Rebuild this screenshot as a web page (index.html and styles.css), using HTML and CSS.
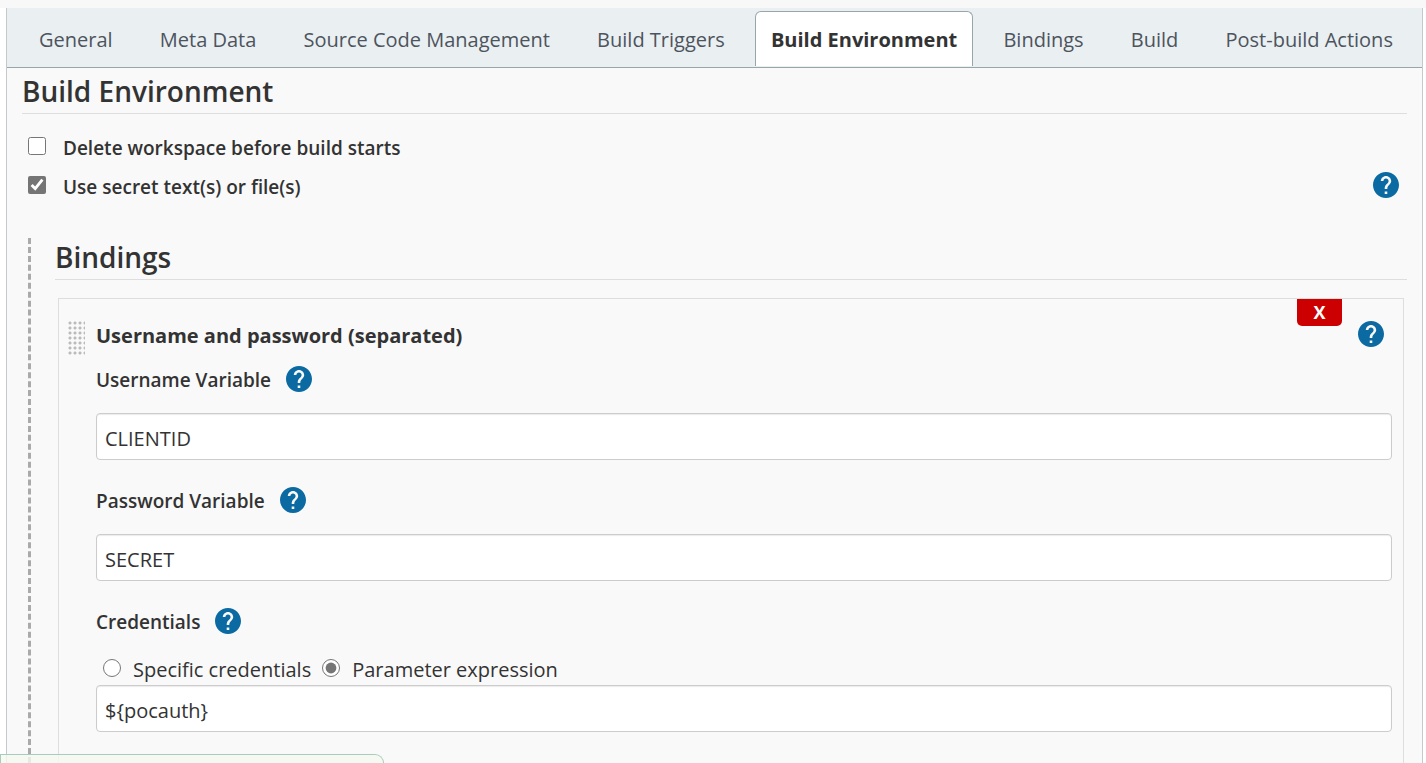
FILE: index.html
```html
<!DOCTYPE html>
<html lang="en">
  <head>
    <meta charset="UTF-8" />
    <meta name="viewport" content="width=device-width, initial-scale=1.0" />
    <title>Job Configuration</title>
    <link rel="stylesheet" href="styles.css">
  </head>
  <body>
    <!-- shared icons -->
    <svg class="sprite" aria-hidden="true">
      <symbol id="help" viewBox="2 2 20 20">
        <path d="M12 2C6.48 2 2 6.48 2 12s4.480 10 10 10 10-4.480 10-10S17.520 2 12 2zm1 17h-2v-2h2v2zm2.070-7.750l-.9.920C13.450 12.900 13 13.500 13 15h-2v-.5c0-1.100.450-2.100 1.170-2.830l1.240-1.260c.370-.360.590-.860.590-1.410 0-1.100-.9-2-2-2s-2 .9-2 2H8c0-2.210 1.790-4 4-4s4 1.790 4 4c0 .880-.360 1.680-.930 2.250z" />
      </symbol>
    </svg>

    <main class="config">
      <nav class="tabs">
        <a class="tab" href="#general">General</a>
        <a class="tab" href="#meta">Meta Data</a>
        <a class="tab" href="#scm">Source Code Management</a>
        <a class="tab" href="#triggers">Build Triggers</a>
        <a class="tab active" href="#environment">Build Environment</a>
        <a class="tab" href="#bindings">Bindings</a>
        <a class="tab" href="#build">Build</a>
        <a class="tab" href="#post-build">Post-build Actions</a>
      </nav>

      <form class="section" id="environment">
        <h2>Build Environment</h2>

        <div class="option">
          <input type="checkbox" id="deleteWorkspace" />
          <label for="deleteWorkspace">Delete workspace before build starts</label>
        </div>
        <div class="option">
          <input type="checkbox" id="useSecret" checked />
          <label for="useSecret">Use secret text(s) or file(s)</label>
          <button class="help" type="button" aria-label="Help for secrets"><svg><use href="#help" /></svg></button>
        </div>

        <div class="nested" id="bindings">
          <h2>Bindings</h2>

          <div class="binding">
            <div class="handle"></div>
            <div class="fields">
              <div class="binding-head">
                <h3>Username and password (separated)</h3>
                <button class="delete" type="button" aria-label="Delete">X</button>
                <button class="help" type="button" aria-label="Help for binding"><svg><use href="#help" /></svg></button>
              </div>

              <div class="field">
                <div class="field-name">
                  <label for="usernameVar">Username Variable</label>
                  <button class="help" type="button" aria-label="Help for username"><svg><use href="#help" /></svg></button>
                </div>
                <input class="text" type="text" id="usernameVar" value="CLIENTID" />
              </div>

              <div class="field">
                <div class="field-name">
                  <label for="passwordVar">Password Variable</label>
                  <button class="help" type="button" aria-label="Help for password"><svg><use href="#help" /></svg></button>
                </div>
                <input class="text" type="text" id="passwordVar" value="SECRET" />
              </div>

              <div class="field">
                <div class="field-name">
                  <label for="credentials">Credentials</label>
                  <button class="help" type="button" aria-label="Help for credentials"><svg><use href="#help" /></svg></button>
                </div>
                <div class="radios">
                  <input type="radio" name="credType" id="specific" />
                  <label for="specific">Specific credentials</label>
                  <input type="radio" name="credType" id="expression" checked />
                  <label for="expression">Parameter expression</label>
                </div>
                <input class="text" type="text" id="credentials" value="${pocauth}" />
              </div>
            </div>
          </div>
        </div>
      </form>
    </main>

    <div class="save-bar"></div>
  </body>
</html>
```
FILE: styles.css
```css
* {
  box-sizing: border-box;
}
body {
  margin: 0;
  height: 100vh;
  display: flex;
  flex-direction: column;
  border-top: 8px solid #f8f8f8;
  background-color: #fff;
  color: #333;
  font-family: "Segoe UI", "Open Sans", "Noto Sans", sans-serif;
  font-size: 20px;
  line-height: 28px;
}
.sprite {
  display: none;
}
.config {
  flex: 1;
  display: flex;
  flex-direction: column;
  margin: 0 3px 0 6px;
  border: solid #c5c9ca;
  border-width: 0 1px;
  background-color: #f9f9f9;
}
.tabs {
  display: flex;
  justify-content: space-between;
  height: 60px;
  padding: 3px 12px 1px 15px;
  background-color: #eaeff2;
  border-bottom: 1px solid #98a5ab;
}
.tab {
  padding: 14px 16px;
  border: 1px solid transparent;
  border-bottom: none;
  border-radius: 6px 6px 0 0;
  color: #4d545d;
  text-decoration: none;
  white-space: nowrap;
}
.tab.active {
  padding: 14px 15px;
  background-color: #fff;
  border-color: #98a5ab;
  color: #333;
  font-weight: bold;
}
.section {
  flex: 1;
  display: flex;
  flex-direction: column;
  padding: 0 15px;
}
h2 {
  margin: 0;
  padding: 4px 0 3px;
  border-bottom: 1px solid #dedede;
  font-size: 28px;
  line-height: 38px;
  font-weight: 600;
}
.section > h2 {
  margin-bottom: 14px;
}
.option {
  display: flex;
  align-items: center;
  height: 39px;
  padding: 0 8px 0 6px;
  font-size: 19px;
  font-weight: 600;
}
input[type="checkbox"],
input[type="radio"] {
  width: 18px;
  height: 18px;
  margin: 0 17px 4px 0;
  accent-color: #757575;
}
.help {
  display: flex;
  margin-bottom: 3px;
  padding: 0;
  border: none;
  background: none;
  color: #0b6aa2;
  cursor: pointer;
}
.help svg {
  width: 26px;
  height: 26px;
  fill: currentColor;
}
.option .help {
  margin-left: auto;
}
.nested {
  flex: 1;
  display: flex;
  flex-direction: column;
  margin: 32px 0 0 6px;
  padding-left: 24px;
  border-left: 3px dashed #aaa;
}
.nested h2 {
  padding-top: 0;
  margin-bottom: 18px;
}
.binding {
  flex: 1;
  display: flex;
  margin: 0 3px;
  padding: 0 11px 0 8px;
  border: 1px solid #dedede;
  border-bottom: none;
}
/* dotted drag handle */
.handle {
  width: 18px;
  height: 36px;
  margin: 21px 11px 0 0;
  background-image: radial-gradient(circle at 3px 3px, #bbb 1px, transparent 2px);
  background-size: 5px 5px;
}
.fields {
  flex: 1;
}
.binding-head {
  display: flex;
  align-items: flex-start;
  height: 59px;
  padding-right: 8px;
}
h3 {
  flex: 1;
  margin: 23px 0 0;
  font-size: 20px;
  font-weight: bold;
}
.delete {
  width: 45px;
  height: 27px;
  padding: 0;
  border: none;
  border-radius: 0 0 5px 5px;
  background-color: #c00;
  color: #fff;
  font: bold 18px/27px "Segoe UI", "Open Sans", sans-serif;
  cursor: pointer;
}
.binding-head .help {
  margin: 22px 0 0 16px;
}
.field {
  margin-bottom: 19px;
}
.field-name {
  display: flex;
  align-items: center;
  gap: 15px;
  height: 44px;
  margin-bottom: 11px;
  font-size: 19px;
  font-weight: 600;
}
.text {
  display: block;
  width: 100%;
  height: 47px;
  padding: 3px 8px 0;
  border: 1px solid #ccc;
  border-radius: 4px;
  background-color: #fff;
  box-shadow: inset 0 1px 1px rgba(0, 0, 0, 0.08);
  color: #333;
  font: inherit;
}
.radios {
  display: flex;
  align-items: center;
  height: 30px;
  padding-left: 7px;
}
.radios input[type="radio"] {
  margin-right: 12px;
}
.radios label {
  margin-right: 11px;
}
.save-bar {
  position: fixed;
  left: 0;
  bottom: 0;
  width: 384px;
  height: 9px;
  border: 1px solid #a9cdbd;
  border-bottom: none;
  border-radius: 0 16px 0 0;
  background-color: rgba(245, 249, 239, 0.8);
}
```
